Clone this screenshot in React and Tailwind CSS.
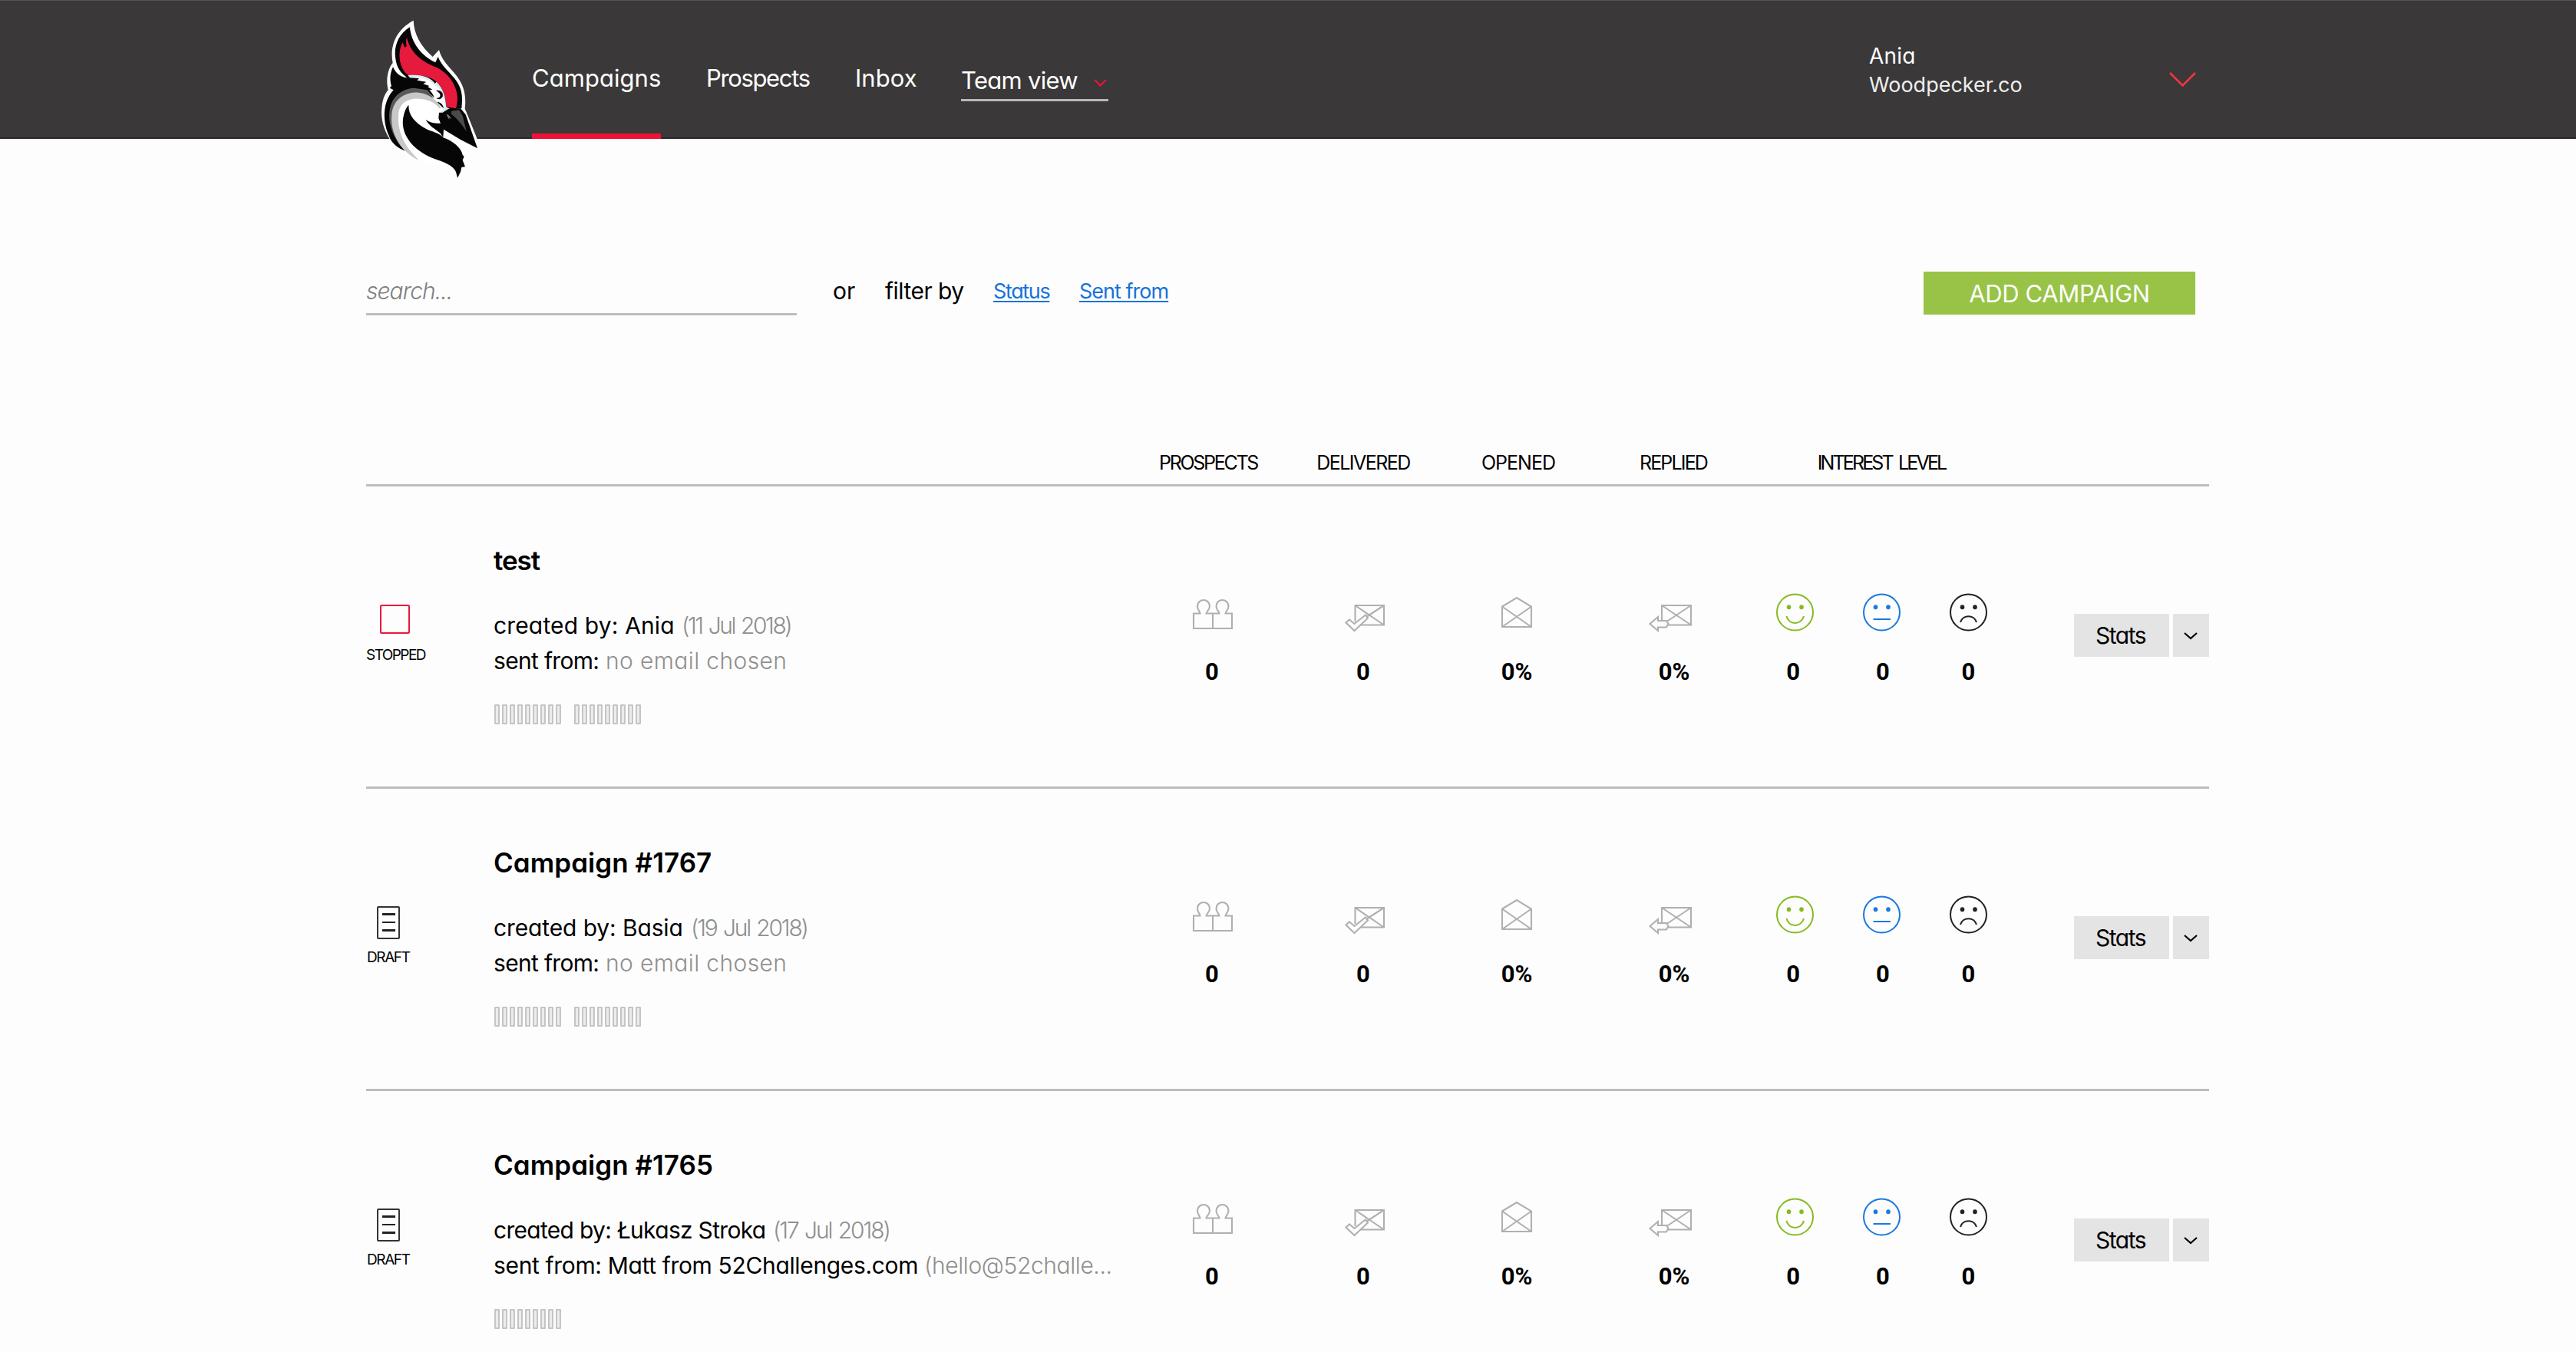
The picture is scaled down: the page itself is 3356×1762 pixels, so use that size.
import React from 'react';

function Logo() {
  return (
    <svg viewBox="0 0 600 750" className="absolute left-0 top-0 h-[250px] w-[200px]">
      {/* white silhouette */}
      <path
        fill="#fff"
        d="M236 80 C238 132 262 178 311 222 L336 195 C344 228 366 252 396 286 C434 330 443 372 437 425 L446 446 L492 560 L488 588 L420 556 L440 620 L438 652 L424 672 L408 700 L380 672 C330 640 250 640 200 600 C150 570 105 500 112 425 C114 392 122 370 137 352 C128 316 134 270 155 246 C144 190 160 120 236 80 Z"
      />
      {/* crest outline */}
      <path
        fill="#060606"
        d="M222 106 C226 166 268 220 322 244 L332 222 C346 258 372 276 396 306 C424 340 430 370 424 424 L378 428 L345 430 L204 298 C178 278 166 252 164 210 C164 170 182 130 222 106 Z"
      />
      {/* red crest */}
      <path
        fill="#e51a3c"
        d="M210 146 C222 200 262 240 328 264 C374 288 400 330 406 366 C410 392 406 410 402 424 L364 418 C364 380 352 348 330 324 C310 300 270 292 216 294 C192 280 178 240 182 204 C184 186 188 176 194 166 L202 186 L210 180 C206 170 206 158 210 146 Z"
      />
      {/* face */}
      <path fill="#d5eef0" d="M214 294 C262 290 300 298 320 326 L326 320 C352 344 362 380 364 418 L378 426 L362 438 L336 440 L300 400 Z" />
      <path
        fill="#fff"
        d="M240 300 C280 302 306 318 318 334 C346 342 358 380 358 420 L342 440 L330 470 L290 420 L296 350 Z"
      />
      <path
        fill="#060606"
        d="M156 262 C142 290 144 318 150 336 L143 344 L158 352 C112 400 116 480 140 530 C150 560 172 578 204 590 C160 550 140 480 146 430 C156 384 186 352 240 346 L300 366 L318 382 C312 368 306 360 298 352 L310 350 L292 340 L298 336 L274 328 L286 320 L250 314 L258 306 L212 304 C190 304 166 288 156 262 Z"
      />
      {/* neck */}
      <path fill="#5a5a5a" d="M142 440 C146 384 184 348 238 344 L290 352 L316 384 C240 358 180 372 160 440 C154 500 180 560 208 592 C164 556 136 490 142 440 Z" />
      <path
        fill="#c8c8c8"
        d="M152 440 C160 386 206 358 256 362 C296 366 330 390 344 424 L200 420 C168 450 180 540 256 626 C190 596 140 520 152 440 Z"
      />
      <path
        fill="#fff"
        d="M178 440 C184 402 214 384 258 386 C300 388 330 406 344 434 L336 468 L350 500 L424 600 L404 680 L380 668 C330 640 290 640 256 622 C200 574 170 510 178 440 Z"
      />
      <path
        fill="#060606"
        d="M217 410 C216 450 240 480 290 506 C320 518 340 522 352 538 C390 550 424 580 428 606 L434 612 L428 626 L438 652 L424 654 L420 672 L408 696 L402 672 C390 644 350 632 316 620 C230 586 180 520 198 450 C202 432 208 420 217 410 Z"
      />
      {/* eye */}
      <path fill="#060606" d="M324 354 C342 350 354 362 350 378 C346 388 334 390 324 384 C338 384 342 378 340 370 C338 362 332 360 324 354 Z" />
      <path fill="#060606" d="M328 398 C344 400 352 410 354 424 C346 416 338 408 328 398 Z" />
      {/* beak */}
      <path
        fill="#060606"
        d="M336 440 L350 440 L372 426 L420 424 L440 448 L486 580 L420 546 L354 506 L352 538 L340 520 C320 504 296 492 284 468 C302 480 322 484 342 482 L334 462 Z"
      />
      <path fill="#4a4a4a" d="M384 434 L414 430 L428 452 L444 516 C430 492 410 466 384 446 Z" />
      <path fill="#777" d="M364 448 C372 446 380 454 384 466 L376 460 L376 468 Z" />
    </svg>
  );
}

function Chevron({ className, d, box, width }) {
  return (
    <svg viewBox={box} className={className} fill="none" stroke="currentColor" strokeWidth={width}>
      <path d={d} />
    </svg>
  );
}

function People() {
  return (
    <svg viewBox="1545 770 60 60" className="h-[60px] w-[60px] overflow-visible" fill="none" stroke="#b0b0b0" strokeWidth="2.100">
      <path d="M1563.500 799.500 H1555 V819 H1605 V799.500 H1596.500 C1597 796 1600.500 795 1600.500 790 C1600.500 785 1596.500 782 1592.500 782 C1588.500 782 1584.500 785 1584.500 790 C1584.500 795 1588 796 1588.500 799.500 H1571.500 C1572 796 1576 795 1576 790 C1576 785 1572 782 1568 782 C1564 782 1560 785 1560 790 C1560 795 1563 796 1563.500 799.500 Z M1580 799.500 V819" />
    </svg>
  );
}

function Delivered() {
  return (
    <svg viewBox="1747 770 60 60" className="h-[60px] w-[60px] overflow-visible" fill="none" stroke="#b0b0b0" strokeWidth="2.100">
      <path d="M1765.500 810 V789 H1803 V814.500 H1772 M1765.500 789 L1803 814.500 M1803 789 L1780 804" />
      <path fill="#fdfdfd" d="M1753.500 811.500 L1758 807.500 L1764.500 813 L1779 801.500 L1782 805.500 L1764.500 822 Z" />
    </svg>
  );
}

function Opened() {
  return (
    <svg viewBox="1949 770 60 60" className="h-[60px] w-[60px]" fill="none" stroke="#b0b0b0" strokeWidth="2.100">
      <path d="M1957 790.500 L1976 779 L1995 790.500 V817 H1957 Z L1995 817 M1995 790.500 L1957 817" />
    </svg>
  );
}

function Replied() {
  return (
    <svg viewBox="2151 770 60 60" className="h-[60px] w-[60px] overflow-visible" fill="none" stroke="#b0b0b0" strokeWidth="2.100">
      <path d="M2165 810 V789 H2203 V814.500 H2173 M2165 789 L2203 814.500 M2203 789 L2170 811" />
      <path fill="#fdfdfd" d="M2149.500 813 L2160 804 V809 H2171 L2173.500 813 L2171 817.500 H2160 V822 Z" />
    </svg>
  );
}

function Face({ color, mouth }) {
  return (
    <svg viewBox="0 0 60 60" className="h-[60px] w-[60px]" fill="none" stroke={color} strokeWidth="2">
      <circle cx="29.500" cy="28" r="23.500" />
      <g fill={color} stroke="none">
        <ellipse cx="21.500" cy="21.200" rx="2.800" ry="3" />
        <ellipse cx="38" cy="21.200" rx="2.800" ry="3" />
      </g>
      <path d={mouth} />
    </svg>
  );
}

function Metric({ width, icon, value, nudge = '' }) {
  return (
    <div className={`flex flex-col items-center pt-[136px] ${width}`}>
      {icon}
      <span className={`mt-[24px] font-[Roboto] text-[31px] font-bold leading-[44px] ${nudge}`}>{value}</span>
    </div>
  );
}

function Bars({ groups }) {
  return (
    <div className="mt-[34px] flex gap-[17px] pl-px">
      {Array.from({ length: groups }, (_, g) => (
        <div key={g} className="flex gap-[3px]">
          {Array.from({ length: 9 }, (_, i) => (
            <i key={i} className="h-[26px] w-[7px] rounded-[1px] border-2 border-[#c6c4c4] bg-[#ececec]" />
          ))}
        </div>
      ))}
    </div>
  );
}

function Status({ kind }) {
  const stopped = kind === 'STOPPED';
  return (
    <div className="flex w-[166px] flex-col items-start pt-[150px]">
      <div className={stopped ? 'flex flex-col items-center' : 'flex flex-col items-center pl-px'}>
        <div className="flex h-[48px] items-center">
          {stopped ? (
            <div className="mb-[2px] mr-[2px] h-[38px] w-[39px] rounded-[2px] border-2 border-[#e8193f]" />
          ) : (
            <div className="ml-px flex h-[43px] w-[30px] flex-col items-center justify-center gap-[8px] rounded-[2px] border-2 border-[#333]">
              <i className="h-[2.500px] w-[17px] bg-[#222]" />
              <i className="h-[2.500px] w-[17px] bg-[#222]" />
              <i className="h-[2.500px] w-[17px] bg-[#222]" />
            </div>
          )}
        </div>
        <span
          className={
            stopped
              ? 'mt-[10px] text-[19px] leading-[24px] tracking-[-1.550px]'
              : 'mt-[10px] text-[19px] leading-[24px] tracking-[-1.400px]'
          }
        >
          {kind}
        </span>
      </div>
    </div>
  );
}

function Campaign({ c }) {
  return (
    <section className="flex h-[394px] border-b-[3px] border-[#bdbdbd]">
      <Status kind={c.status} />
      <div className="w-[831px] shrink-0 whitespace-nowrap pt-[73px] text-[30px] leading-[46px]">
        <h2 className={`text-[35px] font-semibold ${c.titleTracking}`}>{c.title}</h2>
        <p className="mt-[39px] flex">
          <span className={c.byWidth}>{c.by}</span>
          <span className={`font-light text-[#8f8f8f] ${c.dateTracking}`}>{c.date}</span>
        </p>
        <p className="flex">
          <span className={c.fromWidth}>{c.from}</span>
          <span className={`font-light text-[#8f8f8f] ${c.mailTracking}`}>{c.mail}</span>
        </p>
        <Bars groups={c.groups} />
      </div>
      <Metric width="w-[202px]" icon={<People />} value="0" nudge="pl-[8px]" />
      <Metric width="w-[202px]" icon={<Delivered />} value="0" nudge="pr-[2px]" />
      <Metric width="w-[202px]" icon={<Opened />} value="0%" nudge="pr-[6px]" />
      <Metric width="w-[202px]" icon={<Replied />} value="0%" />
      <div className="grid w-[340px] grid-cols-3">
        <Metric width="" icon={<Face color="#85bb22" mouth="M18.500 33 C21 45 38 45 41 33" />} value="0" nudge="pr-[5px]" />
        <Metric width="" icon={<Face color="#1a78e0" mouth="M18.500 37 H41" />} value="0" nudge="pl-[2px]" />
        <Metric width="" icon={<Face color="#222" mouth="M19 41 C22 30.500 37 30.500 40 41" />} value="0" nudge="pr-[2px]" />
      </div>
      <div className="ml-[80px] mt-[166px] flex h-[56px] w-[176px] gap-[5px]">
        <button className="w-[124px] bg-[#e4e4e4] pr-[3px] pt-px text-[30px] tracking-[-1.500px]">Stats</button>
        <button className="flex w-[47px] items-center justify-center bg-[#e4e4e4] pr-[2px] pt-[2px]">
          <Chevron className="h-[12px] w-[20px]" box="0 0 20 12" d="M2 2 L10 9 L18 2" width="2.2" />
        </button>
      </div>
    </section>
  );
}

const campaigns = [
  {
    status: 'STOPPED',
    title: 'test',
    titleTracking: 'tracking-[-1.100px]',
    by: 'created by: Ania',
    byWidth: 'w-[245px] tracking-[0.150px]',
    date: '(11 Jul 2018)',
    dateTracking: 'tracking-[-2.450px] [word-spacing:2px]',
    from: 'sent from:',
    fromWidth: 'w-[146px] tracking-[-0.680px]',
    mail: 'no email chosen',
    mailTracking: 'tracking-[0.380px]',
    groups: 2,
  },
  {
    status: 'DRAFT',
    title: 'Campaign #1767',
    titleTracking: 'tracking-[0.050px]',
    by: 'created by: Basia',
    byWidth: 'w-[257px] tracking-[-0.120px]',
    date: '(19 Jul 2018)',
    dateTracking: 'tracking-[-2.200px] [word-spacing:2px]',
    from: 'sent from:',
    fromWidth: 'w-[146px] tracking-[-0.680px]',
    mail: 'no email chosen',
    mailTracking: 'tracking-[0.380px]',
    groups: 2,
  },
  {
    status: 'DRAFT',
    title: 'Campaign #1765',
    titleTracking: 'tracking-[0.040px]',
    by: 'created by: Łukasz Stroka',
    byWidth: 'w-[364px] tracking-[-0.700px]',
    date: '(17 Jul 2018)',
    dateTracking: 'tracking-[-2.100px] [word-spacing:2px]',
    from: 'sent from: Matt from 52Challenges.com',
    fromWidth: 'w-[561px] tracking-[-0.350px]',
    mail: '(hello@52challe...',
    mailTracking: 'tracking-[-0.410px]',
    groups: 1,
  },
];

export default function App() {
  return (
    <div className="h-[1762px] overflow-hidden bg-[#fdfdfd] font-[Inter,sans-serif] text-black [font-feature-settings:'cv11']">
      <header className="relative flex h-[181px] border-b-2 border-t border-b-[#2a2828] border-t-[#565454] bg-[#3a3838] pl-[460px] text-[31px] leading-[46px] text-white">
        <div className="relative -mt-px w-[233px]">
          <Logo />
        </div>
        <nav className="-mb-[2px] flex whitespace-nowrap">
          <a className="w-[168px] border-b-[7px] border-[#ee1238] pt-[78px] tracking-[0.050px]">Campaigns</a>
          <a className="ml-[59px] w-[138px] pt-[78px] tracking-[-1.360px]">Prospects</a>
          <a className="ml-[56px] w-[83px] pt-[78px] tracking-[0.040px]">Inbox</a>
          <a className="ml-[55px] mt-[80px] flex h-[51px] w-[192px] items-start justify-between border-b-[3px] border-[#b9b7b7] pt-px tracking-[-0.700px]">
            Team view
            <Chevron className="mt-[20px] h-[12px] w-[20px] text-[#ee1238]" box="0 0 20 12" d="M2 2 L9.500 9.500 L17 2" width="2.200" />
          </a>
        </nav>
        <div className="ml-[991px] w-[389px] pt-[53px] leading-[38px]">
          <p className="text-[28px] tracking-[0.200px]">Ania</p>
          <p className="text-[27px] text-[#eee]">Woodpecker.co</p>
        </div>
        <Chevron className="mt-[91px] h-[24px] w-[38px] text-[#f43440]" box="0 0 38 24" d="M3 3 L19.500 19.500 L36 3" width="2.600" />
      </header>

      <main className="ml-[477px] w-[2401px]">
        <div className="mt-[173px] flex h-[57px] whitespace-nowrap text-[30px] leading-[50px]">
          <div className="h-[57px] w-[561px] border-b-[3px] border-[#bdbdbd] font-light italic tracking-[-0.940px] text-[#808080]">search...</div>
          <span className="ml-[47px] w-[68px]">or</span>
          <span className="w-[141px] tracking-[-0.530px]">filter by</span>
          <a className="w-[112px] pt-px text-[27px] tracking-[-1.350px] text-[#1673d8]">
            <span className="underline decoration-2 underline-offset-[3px]">Status</span>
          </a>
          <a className="pt-px text-[27px] tracking-[-0.980px] text-[#1673d8]">
            <span className="underline decoration-2 underline-offset-[3px]">Sent from</span>
          </a>
          <button className="ml-auto mr-[18px] h-[56px] w-[354px] bg-[#98c346] pt-px text-[31px] leading-[55px] tracking-[-0.360px] text-white">
            ADD CAMPAIGN
          </button>
        </div>

        <div className="mt-[172px] flex border-b-[3px] border-[#bdbdbd] pb-[8px] pl-[996px] text-center text-[25px] leading-[40px]">
          <span className="w-[202px] tracking-[-2.300px]">PROSPECTS</span>
          <span className="w-[202px] tracking-[-1.550px]">DELIVERED</span>
          <span className="w-[202px] tracking-[-1px]">OPENED</span>
          <span className="w-[202px] tracking-[-1.830px]">REPLIED</span>
          <span className="w-[340px] tracking-[-2.850px] [word-spacing:4px]">INTEREST LEVEL</span>
        </div>

        {campaigns.map((c) => (
          <Campaign key={c.title} c={c} />
        ))}
      </main>
    </div>
  );
}
